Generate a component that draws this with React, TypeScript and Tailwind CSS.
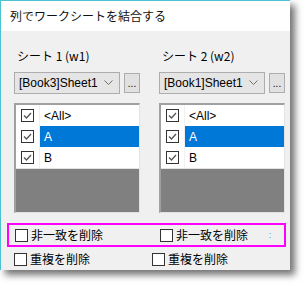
const jp = "font-['Noto_Sans_CJK_JP','Noto_Sans',sans-serif]";
const lat = "font-['Liberation_Sans','Noto_Sans',sans-serif]";

function Check({ checked }: { checked: boolean }) {
  return (
    <div className="w-[13px] h-[13px] border border-[#333333] bg-white flex items-center justify-center shrink-0">
      {checked && (
        <svg width="11" height="11" viewBox="0 0 11 11">
          <polyline points="2,5.5 4.5,8 9,3" fill="none" stroke="#555555" strokeWidth="1.3" />
        </svg>
      )}
    </div>
  );
}

function Row({ label, selected }: { label: string; selected?: boolean }) {
  return (
    <div className={`flex h-[21px] ${selected ? "bg-[#0078d7] text-white" : "bg-white text-black"}`}>
      <div className="w-[24px] flex items-center justify-center bg-white border-r border-[#f0f0f0]">
        <Check checked />
      </div>
      <div className={`pl-[4px] flex items-center text-[12px] ${lat}`}>{label}</div>
    </div>
  );
}

function SheetPanel({ title, book }: { title: string; book: string }) {
  return (
    <div className="w-[126px] flex flex-col">
      <div className={`h-[16px] pl-[3px] text-[12px] leading-[16px] ${jp}`}>{title}</div>
      <div className="mt-[8px] flex gap-[4px]">
        <div className="w-[106px] h-[22px] bg-[#e5e5e5] border border-[#adadad] flex items-center justify-between pl-[4px] pr-[6px]">
          <span className={`text-[12px] ${lat}`}>{book}</span>
          <svg width="9" height="6" viewBox="0 0 9 6">
            <polyline points="0.5,0.5 4.5,4.5 8.5,0.5" fill="none" stroke="#707070" strokeWidth="1" />
          </svg>
        </div>
        <div className="w-[16px] h-[20px] mt-px bg-[#e1e1e1] border border-[#adadad] flex items-end justify-center pb-[3px]">
          <span className={`text-[10px] leading-[10px] ${lat}`}>...</span>
        </div>
      </div>
      <div className="mt-[9px] h-[110px] border-l-2 border-t-2 border-[#a0a0a0] border-r border-b border-r-[#e3e3e3] border-b-[#e3e3e3] bg-[#808080] flex flex-col">
        <Row label="<All>" />
        <Row label="A" selected />
        <Row label="B" />
        <div className="h-px bg-[#e3e3e3]" />
      </div>
    </div>
  );
}

function Opt({ label }: { label: string }) {
  return (
    <div className="flex items-center gap-[3px] w-[145px]">
      <Check checked={false} />
      <span className={`text-[12px] leading-[16px] ${jp}`}>{label}</span>
    </div>
  );
}

export default function App() {
  return (
    <div className="w-[305px] h-[286px] bg-white relative overflow-hidden">
      <div className="w-[290px] h-[270px] border-l border-t border-[#4cc2d0] flex flex-col shadow-[5px_5px_7px_rgba(0,0,0,0.55)]">
        <div className={`h-[30px] bg-white flex items-center pl-[9px] text-[12px] text-[#111] ${jp}`}>
          列でワークシートを結合する
        </div>
        <div className="flex-1 bg-[#f0f0f0] flex flex-col">
          <div className="pt-[17px] pl-[13px] flex gap-[19px]">
            <SheetPanel title="シート 1 (w1)" book="[Book3]Sheet1" />
            <SheetPanel title="シート 2 (w2)" book="[Book1]Sheet1" />
          </div>
          <div className="ml-[6px] mt-[10px] w-[279px] h-[24px] border-2 border-[#ff00ff] flex items-center pl-[6px]">
            <Opt label="非一致を削除" />
            <Opt label="非一致を削除" />
            <span className="text-[8px] text-[#3a8ee6] ml-[-36px]">:</span>
          </div>
          <div className="mt-[4px] pl-[13px] flex items-center">
            <Opt label="重複を削除" />
            <Opt label="重複を削除" />
          </div>
        </div>
      </div>
    </div>
  );
}
